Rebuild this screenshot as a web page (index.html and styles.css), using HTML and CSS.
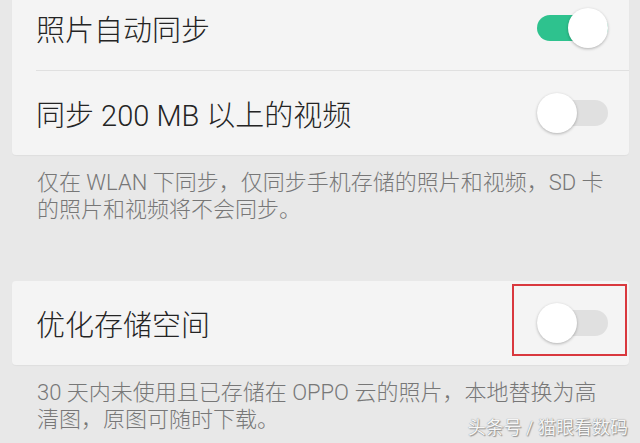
FILE: index.html
```html
<!DOCTYPE html>
<html lang="zh-CN">
<head>
    <meta charset="UTF-8">
    <meta name="viewport" content="width=device-width, initial-scale=1.0">
    <title>照片同步设置</title>
    <link rel="stylesheet" href="styles.css">
</head>
<body>
    <div class="page">
        <div class="card card-top">
            <div class="row">
                <span class="label">照片自动同步</span>
                <span class="switch on"><span class="knob"></span></span>
            </div>
            <div class="row">
                <span class="label">同步 200 MB 以上的视频</span>
                <span class="switch"><span class="knob"></span></span>
            </div>
        </div>
        <p class="note">仅在 WLAN 下同步，仅同步手机存储的照片和视频，SD 卡<br>的照片和视频将不会同步。</p>

        <div class="card card-marked">
            <div class="row tall">
                <span class="label">优化存储空间</span>
                <span class="switch"><span class="knob"></span></span>
            </div>
            <div class="mark"></div>
        </div>
        <p class="note">30 天内未使用且已存储在 OPPO 云的照片，本地替换为高<br>清图，原图可随时下载。</p>
    </div>
    <div class="watermark">头条号 / 猫眼看数码</div>
</body>
</html>
```

FILE: styles.css
```css
body {
    font-family: Roboto, "Noto Sans CJK SC", sans-serif;
    background-color: #e8e8e8;
    margin: 0;
    height: 443px;
    overflow: hidden;
    position: relative;
}
.page {
    padding: 0 11px 0 12px;
}
.card {
    background-color: #f4f4f4;
    border-radius: 4px;
    box-shadow: 0 1px 1px rgba(0, 0, 0, 0.04);
}
.card-top {
    margin-top: -15px;
}
.card-marked {
    position: relative;
    margin-top: 58px;
}
.row {
    display: flex;
    justify-content: space-between;
    align-items: center;
    height: 85px;
    margin-left: 24px;
    padding-right: 21px;
    box-sizing: border-box;
}
.row + .row {
    border-top: 1px solid #e0e0e0;
}
.row.tall {
    height: 84px;
}
.label {
    font-size: 29px;
    font-weight: 300;
    color: #242424;
}
.switch {
    position: relative;
    width: 71px;
    height: 26px;
    border-radius: 13px;
    background-color: #e0e0e0;
}
.switch.on {
    background-color: #2ec28e;
}
.knob {
    position: absolute;
    top: -7px;
    left: 0;
    width: 40px;
    height: 40px;
    border-radius: 50%;
    background-color: #fff;
    box-shadow: 0 1px 3px rgba(0, 0, 0, 0.28);
}
.switch.on .knob {
    left: 31px;
}
.note {
    margin: 0;
    padding: 14px 0 0 25px;
    font-size: 22px;
    font-weight: 300;
    line-height: 27px;
    color: #777;
}
.mark {
    position: absolute;
    left: 500px;
    top: 3px;
    width: 115px;
    height: 72px;
    border: 2px solid #d9383e;
    box-sizing: border-box;
}
.watermark {
    position: absolute;
    right: 12px;
    bottom: 4px;
    font-size: 18px;
    color: #f6f6f6;
    text-shadow: 0 0 1px #777, 1px 1px 1px #999;
}
```
